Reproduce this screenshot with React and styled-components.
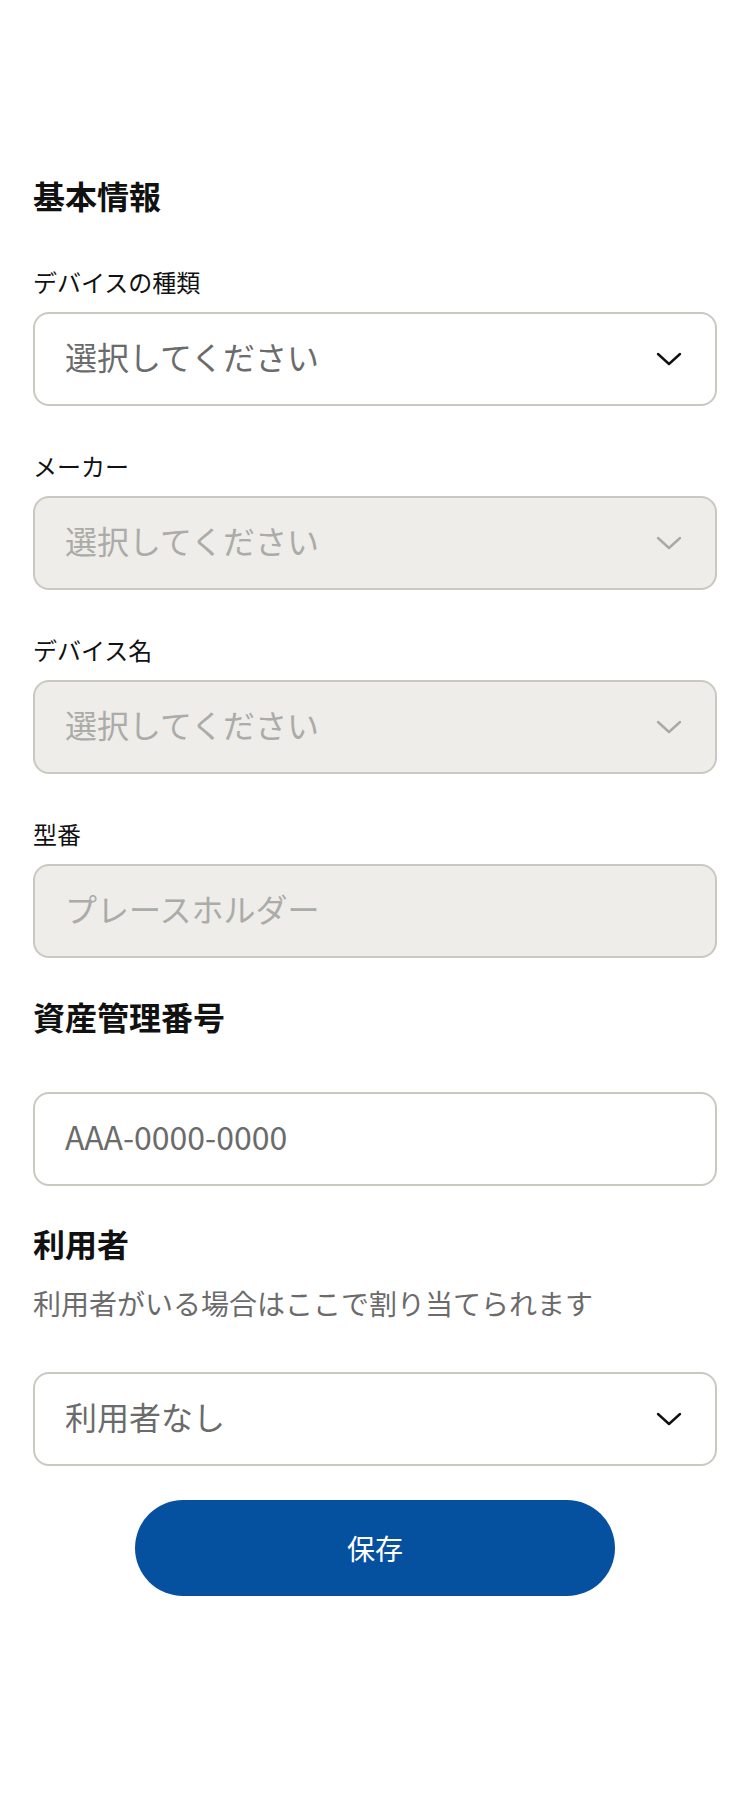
import styled, { createGlobalStyle } from 'styled-components';

const GlobalStyle = createGlobalStyle`
  html, body {
    margin: 0;
    padding: 0;
    background: #fff;
  }
  body {
    font-family: 'Noto Sans CJK JP', 'Noto Sans', sans-serif;
    color: #111;
  }
`;

const Chevron = ({ color }) => (
  <svg width='26' height='14' viewBox='0 0 26 14' fill='none'>
    <path d='M2 2L13 12L24 2' stroke={color} strokeWidth='2.4' strokeLinecap='round' strokeLinejoin='round' />
  </svg>
);

const Select = ({ value, disabled }) => (
  <Box $disabled={disabled} role='combobox' aria-disabled={disabled}>
    <BoxText $disabled={disabled}>{value}</BoxText>
    <Chevron color={disabled ? '#a9a9a6' : '#111'} />
  </Box>
);

const App = () => {
  return (
    <>
      <GlobalStyle />
      <Page>
        <Title>基本情報</Title>

        <FieldList>
          <Field>
            <Label>デバイスの種類</Label>
            <Select value='選択してください' />
          </Field>
          <Field>
            <Label>メーカー</Label>
            <Select value='選択してください' disabled />
          </Field>
          <Field>
            <Label>デバイス名</Label>
            <Select value='選択してください' disabled />
          </Field>
          <Field>
            <Label>型番</Label>
            <Box $disabled>
              <BoxText $disabled>プレースホルダー</BoxText>
            </Box>
          </Field>
        </FieldList>

        {/* asset number */}
        <Title $top={34}>資産管理番号</Title>
        <Box $top={52}>
          <BoxText>AAA-0000-0000</BoxText>
        </Box>

        {/* user */}
        <Title $top={33}>利用者</Title>
        <Description>利用者がいる場合はここで割り当てられます</Description>
        <SelectWrap>
          <Select value='利用者なし' />
        </SelectWrap>

        <SaveButton type='button'>保存</SaveButton>
      </Page>
    </>
  );
};

const Page = styled.main`
  min-height: 1796px;
  box-sizing: border-box;
  padding: 171px 33px 0;
  display: flex;
  flex-direction: column;
`;

const Title = styled.h2`
  margin: ${({ $top }) => $top || 0}px 0 0;
  font-size: 32px;
  line-height: 48px;
  font-weight: 700;
  color: #111;
`;

const FieldList = styled.div`
  margin-top: 45px;
  display: flex;
  flex-direction: column;
  gap: 42px;
`;

const Field = styled.div`
  display: flex;
  flex-direction: column;
  gap: 12px;
`;

const Label = styled.label`
  font-size: 24px;
  line-height: 36px;
  color: #111;
`;

const Box = styled.div`
  margin-top: ${({ $top }) => $top || 0}px;
  height: 94px;
  box-sizing: border-box;
  border: 2px solid #c9c8c1;
  border-radius: 16px;
  background: ${({ $disabled }) => ($disabled ? '#eeedea' : '#fff')};
  padding: 0 33px 0 30px;
  display: flex;
  align-items: center;
  justify-content: space-between;
`;

const BoxText = styled.span`
  font-size: 32px;
  line-height: 1;
  padding-bottom: 7px;
  color: ${({ $disabled }) => ($disabled ? '#ababa8' : '#6b6b6b')};
`;

const Description = styled.p`
  margin: 15px 0 0;
  font-size: 28px;
  line-height: 42px;
  color: #6b6b6b;
`;

const SelectWrap = styled.div`
  margin-top: 48px;
`;

const SaveButton = styled.button`
  align-self: center;
  margin-top: 34px;
  width: 480px;
  height: 96px;
  border: none;
  border-radius: 48px;
  background: #06519f;
  color: #fff;
  font-family: inherit;
  font-size: 28px;
  cursor: pointer;
`;

export default App;
